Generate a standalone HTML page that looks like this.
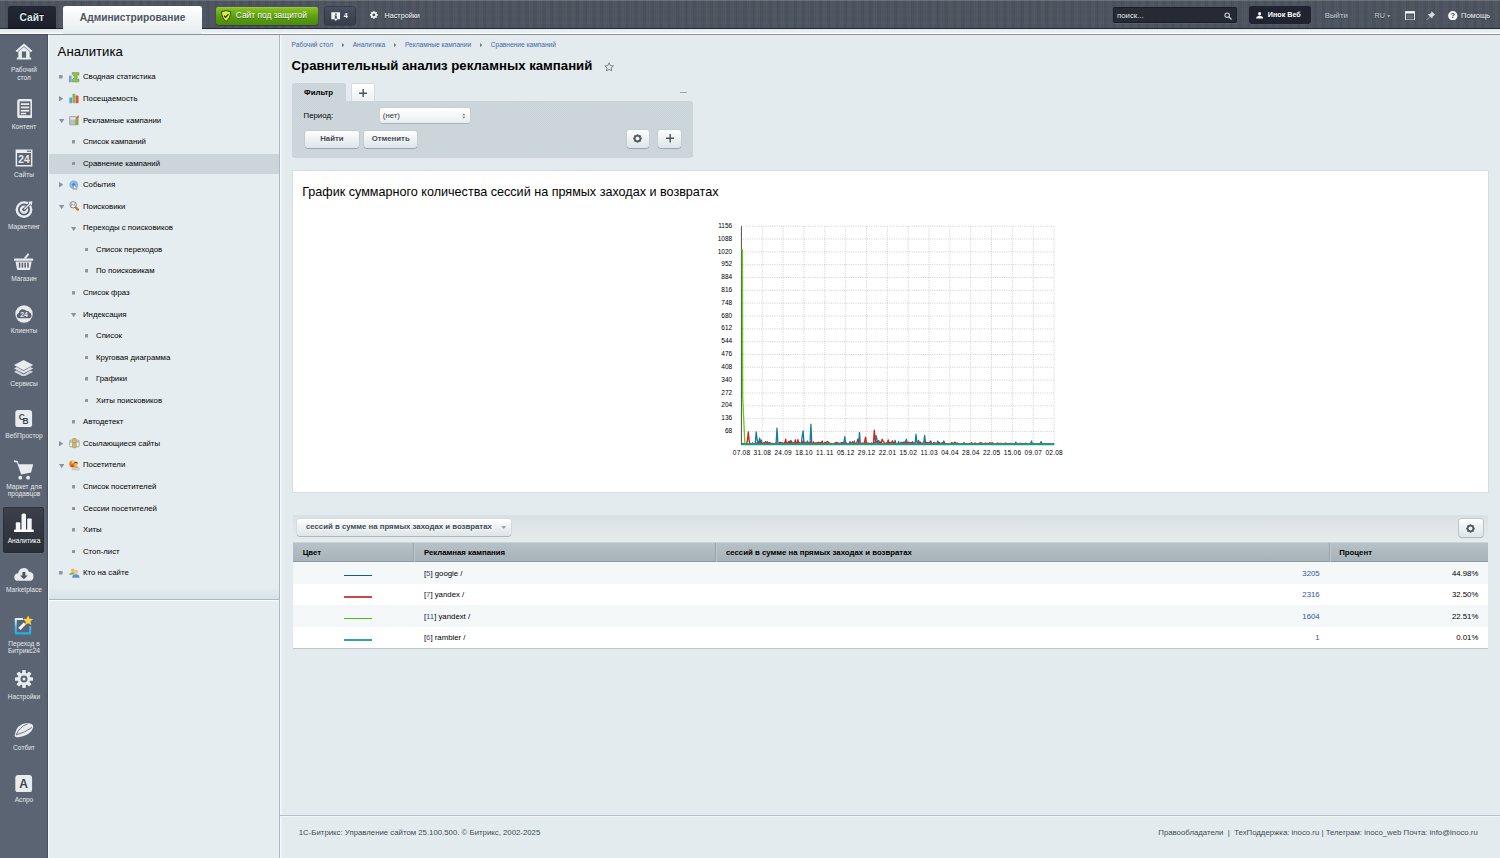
<!DOCTYPE html>
<html lang="ru">
<head>
<meta charset="utf-8">
<title>Сравнительный анализ рекламных кампаний</title>
<style>
html,body{margin:0;padding:0;}
html{background:#e4ebee;overflow:hidden;}
body{zoom:0.6;width:2500px;height:1430px;position:relative;overflow:hidden;font-family:"Liberation Sans",Arial,sans-serif;color:#000;font-size:13px;background:#e4ebee;}
a{text-decoration:none;color:#2675d7;}
/* ---------- header ---------- */
#hdr{position:absolute;left:0;top:0;width:2500px;height:48px;background-color:#4c545f;
 background-image:linear-gradient(rgba(255,255,255,.18) 1px,rgba(255,255,255,0) 2px,rgba(0,0,0,0) 46px,rgba(10,12,18,.6) 47.500px),linear-gradient(rgba(20,24,30,.06) 1px,transparent 1px),linear-gradient(90deg,rgba(20,24,30,.06) 1px,transparent 1px),linear-gradient(90deg,rgba(255,255,255,.03) 50%,transparent 50%);background-size:auto,4px 4px,4px 4px,14px 14px;}
#hdr-strip{position:absolute;left:0;top:48px;width:2500px;height:7px;background:linear-gradient(#dfe7ea,#eef3f5);border-bottom:1px solid #fff;}
#hdr-line{position:absolute;left:0;top:56px;width:2500px;height:2px;background:#8b9398;z-index:5;}
#hdr-line i{position:absolute;left:0;top:0;width:80px;height:2px;background:#474d58;}
.tab{position:absolute;top:10px;height:38px;border-radius:4px 4px 0 0;font-weight:bold;font-size:17px;line-height:40px;text-align:center;}
#tab-site{left:13px;width:80px;background:linear-gradient(#232834,#1c202b);color:#dfe8ef;box-shadow:inset 0 -2px 0 #10131a;text-shadow:0 -1px 0 #000;}
#tab-adm{left:105px;width:232px;height:46px;background:linear-gradient(#ffffff,#f1f5f6 50%,#e6ecef);color:#4b5460;text-shadow:0 1px 0 #fff;z-index:2;}
.hbtn{position:absolute;top:11px;height:31px;border-radius:4px;font-size:12px;line-height:30px;color:#fff;white-space:nowrap;}
.hbtn span,.hbtn svg{position:absolute;}
#btn-sec{left:360px;width:170px;background:linear-gradient(#8fc423,#5a9d10 55%,#4a8c0b);font-size:14px;box-shadow:0 1px 1px rgba(0,0,0,.55),inset 0 1px 0 rgba(255,255,255,.22);text-shadow:0 1px 1px rgba(40,70,0,.6);}
#btn-info{left:541px;width:51px;background:linear-gradient(#485161,#363d4a);box-shadow:0 0 0 1px #21252e,0 2px 1px rgba(255,255,255,.06);font-weight:bold;}
#btn-set{left:614px;width:100px;color:#fff;text-shadow:0 1px 0 rgba(0,0,0,.5);}
#srch{position:absolute;left:1855px;top:12px;width:204px;height:23px;background:#252a35;border:1px solid #1a1e26;box-shadow:0 1px 0 rgba(255,255,255,.14);border-radius:2px;color:#e3e9ee;font-size:13px;line-height:25px;}
#srch span{position:absolute;left:5px;top:0;}
#srch svg{position:absolute;left:184px;top:6px;}
#btn-user{left:2082px;width:103px;height:29.500px;top:10.500px;background:#1f2430;font-weight:bold;box-shadow:0 1px 0 rgba(255,255,255,.08);}
.hlink{position:absolute;top:11px;line-height:30px;font-size:13px;color:#c9d4df;white-space:nowrap;text-shadow:0 1px 0 rgba(0,0,0,.4);}
.hico{position:absolute;}
/* ---------- left icon menu ---------- */
#lm{position:absolute;left:0;top:56px;width:80px;height:1374px;background:#5b6472;box-shadow:inset -2px 0 0 #4c545f;}
.mi{position:absolute;left:0;width:80px;text-align:center;color:#e4e8ec;font-size:11px;line-height:12.700px;}
.mi svg{display:block;margin:0 auto;}
#mi-act{position:absolute;left:5.200px;top:789px;width:67.700px;height:76.300px;background:linear-gradient(#3b404b,#2a2f37);border-radius:5px;box-shadow:inset 0 0 0 1px #25292f,0 1px 0 rgba(255,255,255,.12);}
/* ---------- submenu ---------- */
#sm{position:absolute;left:80px;top:56px;width:385px;height:1374px;background:#e6edf0;border-right:1.600px solid #a9bacb;box-shadow:inset 2px 0 0 #f6f9fa,2.600px 0 0 #f3f7f9;}
#sm h2{position:absolute;left:16px;top:17px;margin:0;font-weight:normal;font-size:22px;line-height:26px;color:#000;}
.it{position:absolute;left:0;width:385px;height:36px;line-height:36px;font-size:13px;color:#000;white-space:nowrap;}
.it em{position:absolute;left:2px;top:2.800px;width:383px;height:32px;background:#cbd5da;}
.it span{position:absolute;top:0;}
.it svg{position:absolute;}
#sm-end{position:absolute;left:2px;top:943px;width:383px;height:1.600px;background:#a9bacb;box-shadow:0 1.600px 0 #fafcfd;}
#sm-sh{position:absolute;left:2px;top:923px;width:383px;height:20px;background:linear-gradient(rgba(190,205,214,0),rgba(190,205,214,.35));}
/* ---------- content ---------- */
#ct{position:absolute;left:466px;top:56px;width:2034px;height:1374px;}
#bc{position:absolute;left:20px;top:12.200px;font-size:11px;line-height:14px;color:#3d68a6;white-space:nowrap;}
#bc a{color:#3d68a6;}
#bc svg{display:inline-block;margin:0 14.400px 0 14.400px;vertical-align:0;}
#ttl{position:absolute;left:20px;top:39.800px;margin:0;font-size:22px;line-height:30px;font-weight:bold;color:#000;white-space:nowrap;}
#star{position:absolute;left:540px;top:47px;}
/* filter */
.tex{background-color:#ccd6da;background-image:conic-gradient(#c6d1d6 25%,#d1dade 0 50%,#c6d1d6 0 75%,#d1dade 0);background-size:3.33333px 3.33333px;}
#flt-tab{position:absolute;left:20px;top:82.600px;width:90px;height:31px;border-radius:5px 5px 0 0;font-weight:bold;font-size:13px;line-height:33px;text-align:center;color:#000;}
#flt-add{position:absolute;left:119px;top:82.600px;width:40px;height:30.500px;background:linear-gradient(#fff,#edf1f3);border:1px solid #d3dbdf;border-bottom:none;border-radius:4px 4px 0 0;box-sizing:border-box;}
#flt-min{position:absolute;left:667.500px;top:96.800px;width:11.500px;height:2.200px;background:#9ca6ac;}
#flt{position:absolute;left:20px;top:113px;width:668.500px;height:93px;border-radius:0 5px 5px 5px;box-shadow:0 1px 1px rgba(0,0,0,.18);}
.btn{position:absolute;height:28.500px;border-radius:4px;background:linear-gradient(#fff,#f0f3f5 40%,#dde5e8);box-shadow:0 1px 1px rgba(0,0,0,.38),0 0 0 1px rgba(0,0,0,.07);font-weight:bold;font-size:13px;line-height:28px;text-align:center;color:#3f4b54;text-shadow:0 1px 0 #fff;white-space:nowrap;}
.btn svg,#flt-add svg{position:absolute;}
#sel{position:absolute;left:147.500px;top:11px;width:149.500px;height:25.500px;border-radius:3px;background:linear-gradient(#fff,#f3f6f7 60%,#e6ecee);box-shadow:0 1px 1px rgba(0,0,0,.28),0 0 0 1px rgba(0,0,0,.05);font-size:13px;line-height:25px;}
/* chart block */
#cb{position:absolute;left:20px;top:226.700px;width:1992px;height:535.300px;background:#fff;border:1px solid #d6dee1;}
#cb h3{position:absolute;left:16px;top:24.600px;margin:0;font-weight:normal;font-size:21px;line-height:26px;white-space:nowrap;}
/* table */
#tb-top{position:absolute;left:22px;top:802px;width:1992px;height:45px;background:linear-gradient(#dae1e4,#e6ebed);}
#tb-head{position:absolute;left:22px;top:847px;width:1992px;height:34px;background:linear-gradient(#b6c2c7,#a7b3b9);border-top:1px solid #c9d2d6;border-bottom:1px solid #8d999f;box-sizing:border-box;font-weight:bold;font-size:13px;line-height:34px;}
#tb-head span{position:absolute;top:0;white-space:nowrap;}
#tb-head u{position:absolute;top:0;width:1px;height:32px;background:#98a4aa;box-shadow:1px 0 0 #c9d3d7;}
.row{position:absolute;left:22px;width:1992px;height:36px;font-size:13px;line-height:37.400px;background:#fff;}
.row.odd{background:#f5f8f9;}
.row span{position:absolute;top:0;white-space:nowrap;margin-top:.9px;}
.row a{color:#2e569c;}
.row hr{position:absolute;left:85.700px;top:20.700px;width:45.800px;height:2px;margin:0;border:0;}
#tb-bot{position:absolute;left:22px;top:1024.400px;width:1992px;height:1px;background:#bcc7cc;}
/* footer */
#ft-line{position:absolute;left:0;top:1302.500px;width:2034px;height:1.600px;background:#b3c2ce;box-shadow:0 1.600px 0 #f1f6f8;}
#ft-l{position:absolute;left:32px;top:1324.500px;font-size:13px;line-height:16px;color:#3f4b54;white-space:nowrap;}
#ft-r{position:absolute;right:37px;top:1324.500px;font-size:13px;line-height:16px;color:#3f4b54;white-space:nowrap;}
@supports not (zoom:0.6){body{transform:scale(.6);transform-origin:0 0;}}
</style>
</head>
<body>
<div id="hdr"></div>
<div id="hdr-strip"></div>
<div id="hdr-line"><i></i></div>
<div class="tab" id="tab-site">Сайт</div>
<div class="tab" id="tab-adm">Администрирование</div>
<div class="hbtn" id="btn-sec"><svg style="left:9px;top:5px" width="17" height="20" viewBox="0 0 17 20"><path d="M8.500 1 Q12 2.500 16 2.500 Q16.500 13 8.500 19 Q0.500 13 1 2.500 Q5 2.500 8.500 1 Z" fill="#d9f23c" stroke="#2b3d0d" stroke-width="1.600"/><path d="M5 9.500 L7.800 12.300 L12.300 6.800" fill="none" stroke="#26330c" stroke-width="2.200"/></svg><span style="left:33px;top:-1.300px">Сайт под защитой</span></div>
<div class="hbtn" id="btn-info"><svg style="left:10px;top:9px" width="16" height="16" viewBox="0 0 16 16"><path d="M0.500 0.500 H15.500 V12 H10.500 L8 15 L5.500 12 H0.500 Z" fill="#f2f4f6"/><rect x="7" y="2.500" width="2.400" height="2.200" fill="#2b303a"/><path d="M5.800 5.800 H9.400 V9.500 H10.500 V10.800 H5.800 V9.500 H7 V7 H5.800 Z" fill="#2b303a"/></svg><span style="left:32px;top:0">4</span></div>
<div class="hbtn" id="btn-set"><svg style="left:3px;top:8px" width="13" height="13" viewBox="0 0 15 15"><g fill="#f4f6f8"><circle cx="7.500" cy="7.500" r="5.600"/><rect x="6" y="0" width="3" height="15" rx="1"/><rect x="6" y="0" width="3" height="15" rx="1" transform="rotate(45 7.500 7.500)"/><rect x="6" y="0" width="3" height="15" rx="1" transform="rotate(90 7.500 7.500)"/><rect x="6" y="0" width="3" height="15" rx="1" transform="rotate(135 7.500 7.500)"/></g><circle cx="7.500" cy="7.500" r="2.700" fill="#474f59"/></svg><span style="left:27px;top:0">Настройки</span></div>
<div id="srch"><span>поиск...</span><svg width="13" height="13" viewBox="0 0 16 16"><circle cx="6.500" cy="6.500" r="4.600" fill="none" stroke="#c9d0d7" stroke-width="2.200"/><path d="M10 10 L14.500 14.500" stroke="#c9d0d7" stroke-width="2.800" stroke-linecap="round"/></svg></div>
<div class="hbtn" id="btn-user"><svg style="left:11px;top:9.500px" width="12" height="11" viewBox="0 0 14 13"><ellipse cx="7" cy="3.600" rx="3" ry="3.600" fill="#fff"/><path d="M0 13 Q0 8.500 5 8 H9 Q14 8.500 14 13 Z" fill="#fff"/></svg><span style="left:31px;top:0">Инок Веб</span></div>
<div class="hlink" style="left:2208px">Выйти</div>
<div class="hlink" style="left:2291px;font-size:12px;color:#c4cfda">RU</div>
<svg class="hico" style="left:2312px;top:24.500px" width="6" height="4" viewBox="0 0 8 5"><path d="M0.500 0.500 H7.500 L4 4.500 Z" fill="#bcc8d4"/></svg>
<svg class="hico" style="left:2341px;top:18px" width="17" height="16" viewBox="0 0 17 16"><rect x="1" y="1" width="15" height="14" fill="#4a525d" stroke="#f2f4f6" stroke-width="1.600"/><rect x="1" y="1" width="15" height="3.200" fill="#f2f4f6"/><rect x="3.500" y="6.500" width="10" height="6" fill="#636b76"/></svg>
<svg class="hico" style="left:2377px;top:18px" width="16" height="16" viewBox="0 0 16 16"><path d="M9.500 0.500 L15.500 6.500 L13.500 7 L11 9.500 L10.500 13 L7 9.500 L1 15.500 L0.500 15 L6.500 9 L3 5.500 L6.500 5 L9 2.500 Z" fill="#d4dae0"/></svg>
<svg class="hico" style="left:2414px;top:18px" width="16" height="16" viewBox="0 0 16 16"><circle cx="8" cy="8" r="7.800" fill="#f4f6f8"/><text x="8" y="12.500" text-anchor="middle" font-family="Liberation Sans,sans-serif" font-weight="bold" font-size="12.500" fill="#3a414b">?</text></svg>
<div class="hlink" style="left:2435px;color:#eef2f5;font-size:12.500px">Помощь</div>

<div id="lm">
<div id="mi-act"></div>
<!--LM-->
<svg style="position:absolute;left:25.5px;top:16.3px" width="29" height="27" viewBox="0 0 29 27"><path d="M15 1 L29 13 L27 15.5 L15 5.5 L3 15.5 L1 13 Z" fill="#e9ecef"/><path d="M5.5 14 L15 6.5 L24.5 14 V25 H5.5 Z M11.5 14 V25 H18.5 V14 Z" fill="#e9ecef" fill-rule="evenodd"/><rect x="3" y="24.5" width="24" height="3" fill="#e9ecef"/></svg>
<div class="mi" style="top:54.0px;color:#e4e8ec">Рабочий<br>стол</div>
<svg style="position:absolute;left:26.0px;top:108.8px" width="28" height="32" viewBox="0 0 28 32"><rect x="2" y="0" width="26" height="32" rx="4" fill="#e9ecef"/><rect x="6" y="4" width="18" height="23" fill="#5a6371"/><rect x="8" y="7" width="14" height="3" fill="#e9ecef"/><rect x="8" y="12.5" width="14" height="3" fill="#e9ecef"/><rect x="8" y="18" width="14" height="3" fill="#e9ecef"/><rect x="8" y="23" width="9" height="2.5" fill="#e9ecef"/></svg>
<div class="mi" style="top:148.2px;color:#e4e8ec">Контент</div>
<svg style="position:absolute;left:25.0px;top:192.3px" width="30" height="30" viewBox="0 0 30 30"><path d="M1 1 H29 V29 H1 Z M3.500 6.500 V26.500 H26.500 V6.500 Z" fill="#e9ecef" fill-rule="evenodd"/><rect x="20.500" y="2.500" width="2.500" height="2.500" fill="#4a525e"/><rect x="24" y="2.500" width="2.500" height="2.500" fill="#4a525e"/><text x="15" y="23.500" font-family="Liberation Sans,sans-serif" font-weight="bold" font-size="17" text-anchor="middle" fill="#e9ecef">24</text></svg>
<div class="mi" style="top:228.7px;color:#e4e8ec">Сайты</div>
<svg style="position:absolute;left:25.0px;top:276.8px" width="30" height="31" viewBox="0 0 30 31"><circle cx="15" cy="16" r="14" fill="#e9ecef"/><circle cx="15" cy="16" r="8.5" fill="none" stroke="#5a6371" stroke-width="3"/><circle cx="15" cy="16" r="3" fill="#5a6371"/><path d="M15 16 L27 4" stroke="#5a6371" stroke-width="5"/><path d="M15.5 15.5 L26 5" stroke="#e9ecef" stroke-width="2.2"/><path d="M22 3 L29 2 L28 9 Z" fill="#e9ecef"/></svg>
<div class="mi" style="top:316.0px;color:#e4e8ec">Маркетинг</div>
<svg style="position:absolute;left:24.0px;top:365.3px" width="32" height="29" viewBox="0 0 32 29"><path d="M16 9 L23 0.5 L25.5 2.5 L20 9 Z" fill="#e9ecef"/><rect x="0" y="9" width="32" height="4" rx="1" fill="#e9ecef"/><path d="M2.5 14 H29.5 L27 27 Q26.7 28.5 25 28.5 H7 Q5.3 28.5 5 27 Z" fill="#e9ecef"/><g fill="#5a6371"><rect x="8" y="16" width="2.6" height="8.5"/><rect x="12.7" y="16" width="2.6" height="8.5"/><rect x="17.3" y="16" width="2.6" height="8.5"/><rect x="22" y="16" width="2.6" height="8.5"/></g></svg>
<div class="mi" style="top:401.8px;color:#e4e8ec">Магазин</div>
<svg style="position:absolute;left:25.0px;top:452.3px" width="30" height="30" viewBox="0 0 30 30"><circle cx="15" cy="15" r="14.500" fill="#e9ecef"/><path d="M7 22 Q2.500 22 3 17.500 Q3.500 14 6.500 13.500 Q7 7 13 7 Q17 7 19 10 Q22.500 9 24 12.500 Q27.500 13 27.500 17.500 Q27.500 22 23 22 Z" fill="#5a6371"/><text x="15" y="20" font-family="Liberation Sans,sans-serif" font-weight="bold" font-size="11.500" text-anchor="middle" fill="#e9ecef">24</text></svg>
<div class="mi" style="top:488.5px;color:#e4e8ec">Клиенты</div>
<svg style="position:absolute;left:24.0px;top:543.3px" width="32" height="28" viewBox="0 0 32 28"><path d="M16 0 L32 8.5 L16 17 L0 8.5 Z" fill="#e9ecef"/><path d="M0 14 L4.5 11.8 L16 18.5 L27.500 11.8 L32 14 L16 22.5 Z" fill="#e9ecef" opacity=".92"/><path d="M0 19.500 L4.5 17.300 L16 24 L27.500 17.300 L32 19.500 L16 28 Z" fill="#e9ecef" opacity=".85"/></svg>
<div class="mi" style="top:576.8px;color:#e4e8ec">Сервисы</div>
<svg style="position:absolute;left:25.5px;top:627.0px" width="29" height="29" viewBox="0 0 29 29"><rect x="0.500" y="0" width="28" height="29" rx="5" fill="#e9ecef"/><text x="11.500" y="17" font-family="Liberation Sans,sans-serif" font-weight="bold" font-size="14" text-anchor="middle" fill="#3d4450">С</text><text x="17.500" y="23" font-family="Liberation Sans,sans-serif" font-weight="bold" font-size="14" text-anchor="middle" fill="#3d4450">В</text></svg>
<div class="mi" style="top:663.6px;color:#e4e8ec">ВебПростор</div>
<svg style="position:absolute;left:24.0px;top:710.8px" width="32" height="33" viewBox="0 0 32 33"><path d="M0 0.500 L6 1.500 L8 7 H32 L28.5 21 L12 24 L5 4 L0 3.500 Z" fill="#e9ecef"/><circle cx="10.500" cy="29.500" r="3.200" fill="#e9ecef"/><circle cx="23.500" cy="29.500" r="3.200" fill="#e9ecef"/></svg>
<div class="mi" style="top:748.8px;color:#e4e8ec">Маркет для<br>продавцов</div>
<svg style="position:absolute;left:23.5px;top:799.5px" width="33" height="32" viewBox="0 0 33 32"><rect x="3" y="15.500" width="7.500" height="13" rx="1.500" fill="#f4f5f6"/><rect x="12.500" y="1" width="7.500" height="28" rx="2.500" fill="#f4f5f6"/><rect x="22" y="9" width="7.500" height="20" rx="1.500" fill="#f4f5f6"/><rect x="0" y="27.500" width="33" height="4.500" rx="1.500" fill="#fff"/></svg>
<div class="mi" style="top:839.3px;color:#fff">Аналитика</div>
<svg style="position:absolute;left:23.5px;top:888.7px" width="33" height="24" viewBox="0 0 33 24"><path d="M8 23 Q0 23 0.500 16.500 Q1 11 7 10.500 Q8 2 16.500 1.500 Q23 1.500 25 8 Q33 8.500 32.5 16.500 Q32 23 25 23 Z" fill="#e9ecef"/><path d="M14 8.500 H19 V14 H23 L16.500 20.500 L10 14 H14 Z" fill="#4d5562"/></svg>
<div class="mi" style="top:920.1px;color:#e4e8ec">Marketplace</div>
<svg style="position:absolute;left:23.7px;top:971.5px" width="32" height="31" viewBox="0 0 32 31"><defs><linearGradient id="bg24" x1="0" y1="0" x2="0" y2="1"><stop offset="0" stop-color="#dff3fc"/><stop offset=".6" stop-color="#3cbdf2"/><stop offset="1" stop-color="#22aeea"/></linearGradient></defs><path d="M15 5 H3 V29 H27 V17" fill="none" stroke="url(#bg24)" stroke-width="3.400" stroke-linejoin="round"/><path d="M9 21.500 L18 12.500" stroke="#f4f4f4" stroke-width="5"/><path d="M23.500 -1 L26 4.500 L32 5 L27.500 9 L29 15 L23.500 12 L18.500 15 L19.500 9 L15 5 L21 4.500 Z" fill="#fbd043"/></svg>
<div class="mi" style="top:1010.1px;color:#e4e8ec">Переход в<br>Битрикс24</div>
<svg style="position:absolute;left:25.0px;top:1061.5px" width="30" height="30" viewBox="0 0 30 30"><g fill="#e9ecef"><circle cx="15" cy="15" r="10.500"/><rect x="12" y="0" width="6" height="30" rx="1.5"/><rect x="12" y="0" width="6" height="30" rx="1.500" transform="rotate(45 15 15)"/><rect x="12" y="0" width="6" height="30" rx="1.500" transform="rotate(90 15 15)"/><rect x="12" y="0" width="6" height="30" rx="1.500" transform="rotate(135 15 15)"/></g><circle cx="15" cy="15" r="5.800" fill="#5a6371"/><circle cx="15" cy="15" r="2.500" fill="#e9ecef"/></svg>
<div class="mi" style="top:1098.7px;color:#e4e8ec">Настройки</div>
<svg style="position:absolute;left:23.5px;top:1148.0px" width="33" height="27" viewBox="0 0 33 27"><path d="M1 22 Q4 3 22 1.500 Q33 2 32 9 Q29 21 8 25.500 Q1 26 1 22 Z" fill="#e9ecef"/><path d="M3.500 21.500 Q9 8 23 3" fill="none" stroke="#6b7480" stroke-width="1.600"/><path d="M3.500 21.500 Q18 18 30 9" fill="none" stroke="#6b7480" stroke-width="1.600"/></svg>
<div class="mi" style="top:1183.5px;color:#e4e8ec">Сотбит</div>
<svg style="position:absolute;left:25.5px;top:1235.3px" width="29" height="29" viewBox="0 0 29 29"><rect x="0.500" y="0" width="28" height="29" rx="5" fill="#e9ecef"/><text x="14.500" y="22" font-family="Liberation Sans,sans-serif" font-weight="bold" font-size="20" text-anchor="middle" fill="#3d4450">A</text></svg>
<div class="mi" style="top:1270.3px;color:#e4e8ec">Аспро</div>
<!--/LM-->
</div>

<div id="sm">
<h2>Аналитика</h2>
<!--SM-->
<div class="it" style="top:54.7px"><svg style="left:19px;top:15px" width="6" height="6" viewBox="0 0 6 6"><rect width="6" height="6" rx="1.500" fill="#8a96a1"/></svg><svg style="left:35px;top:9px" width="18" height="18" viewBox="0 0 17 17"><rect x="0" y="5.500" width="4" height="10.500" rx=".8" fill="#6aa2e0"/><path d="M5 1 H15.500 V5 H11 L13.500 8 L11 11 H15.500 V15.500 H5 V12.500 L9 8 L5 3.500 Z" fill="#93c34e" stroke="#5f9230" stroke-width="1"/></svg><span style="left:58.3px">Сводная статистика</span></div>
<div class="it" style="top:90.63px"><svg style="left:18.5px;top:13.500px" width="7" height="9" viewBox="0 0 7 9"><path d="M0 0 L7 4.500 L0 9 Z" fill="#8792a0"/></svg><svg style="left:35px;top:9px" width="18" height="18" viewBox="0 0 17 17"><rect x="0.500" y="7" width="4.500" height="9" rx="1" fill="#5b9be0"/><rect x="5.500" y="1" width="4.500" height="15" rx="1" fill="#86b94a"/><rect x="10.500" y="4" width="4.500" height="12" rx="1" fill="#e0503c"/></svg><span style="left:58.3px">Посещаемость</span></div>
<div class="it" style="top:126.56px"><svg style="left:17.8px;top:16px" width="9" height="7" viewBox="0 0 9 7"><path d="M0 0 H9 L4.500 7 Z" fill="#8792a0"/></svg><svg style="left:35px;top:9px" width="18" height="18" viewBox="0 0 17 17"><rect x="0.500" y="2.500" width="12" height="13" rx="1.500" fill="#b9bdc0" stroke="#8c9196"/><rect x="2" y="4" width="9" height="3" fill="#e9ecee"/><rect x="10" y="6" width="5" height="10" fill="#7fb13c"/><path d="M10 6 L15 0 L15.500 5 Z" fill="#e0503c"/></svg><span style="left:58.3px">Рекламные кампании</span></div>
<div class="it" style="top:162.49px"><svg style="left:39.5px;top:15px" width="6" height="6" viewBox="0 0 6 6"><rect width="6" height="6" rx="1.500" fill="#8a96a1"/></svg><span style="left:58.3px">Список кампаний</span></div>
<div class="it" style="top:198.42px"><em></em><svg style="left:39.5px;top:15px" width="6" height="6" viewBox="0 0 6 6"><rect width="6" height="6" rx="1.500" fill="#8a96a1"/></svg><span style="left:58.3px">Сравнение кампаний</span></div>
<div class="it" style="top:234.35px"><svg style="left:18.5px;top:13.500px" width="7" height="9" viewBox="0 0 7 9"><path d="M0 0 L7 4.500 L0 9 Z" fill="#8792a0"/></svg><svg style="left:35px;top:9px" width="18" height="18" viewBox="0 0 17 17"><circle cx="7.500" cy="7.500" r="6.800" fill="#6ea6ec"/><circle cx="7.500" cy="7.500" r="4.600" fill="none" stroke="#a9cbf5" stroke-width="1.400"/><circle cx="7.500" cy="7.500" r="2" fill="#3f7fd8"/><path d="M7 7 L7 15 L9 13.300 L10.500 16.500 L12 15.800 L10.600 12.800 L13 12.500 Z" fill="#fff" stroke="#666" stroke-width=".8"/></svg><span style="left:58.3px">События</span></div>
<div class="it" style="top:270.28px"><svg style="left:17.8px;top:16px" width="9" height="7" viewBox="0 0 9 7"><path d="M0 0 H9 L4.500 7 Z" fill="#8792a0"/></svg><svg style="left:35px;top:9px" width="18" height="18" viewBox="0 0 17 17"><circle cx="6.500" cy="6" r="5" fill="#fbfbfb" stroke="#7a7a7a" stroke-width="1.500"/><path d="M4 4.500 L4 7.500 M4 4.500 L6.500 6.500 L9 4.500 L9 7.500" stroke="#777" stroke-width="1.100" fill="none"/><path d="M10.800 10.300 L14 13.500" stroke="#cf6a1e" stroke-width="3.600" stroke-linecap="round"/></svg><span style="left:58.3px">Поисковики</span></div>
<div class="it" style="top:306.21px"><svg style="left:38.3px;top:16px" width="9" height="7" viewBox="0 0 9 7"><path d="M0 0 H9 L4.500 7 Z" fill="#8792a0"/></svg><span style="left:58.3px">Переходы с поисковиков</span></div>
<div class="it" style="top:342.14px"><svg style="left:61px;top:15px" width="6" height="6" viewBox="0 0 6 6"><rect width="6" height="6" rx="1.500" fill="#8a96a1"/></svg><span style="left:80px">Список переходов</span></div>
<div class="it" style="top:378.07px"><svg style="left:61px;top:15px" width="6" height="6" viewBox="0 0 6 6"><rect width="6" height="6" rx="1.500" fill="#8a96a1"/></svg><span style="left:80px">По поисковикам</span></div>
<div class="it" style="top:414.0px"><svg style="left:39.5px;top:15px" width="6" height="6" viewBox="0 0 6 6"><rect width="6" height="6" rx="1.500" fill="#8a96a1"/></svg><span style="left:58.3px">Список фраз</span></div>
<div class="it" style="top:449.93px"><svg style="left:38.3px;top:16px" width="9" height="7" viewBox="0 0 9 7"><path d="M0 0 H9 L4.500 7 Z" fill="#8792a0"/></svg><span style="left:58.3px">Индексация</span></div>
<div class="it" style="top:485.86px"><svg style="left:61px;top:15px" width="6" height="6" viewBox="0 0 6 6"><rect width="6" height="6" rx="1.500" fill="#8a96a1"/></svg><span style="left:80px">Список</span></div>
<div class="it" style="top:521.79px"><svg style="left:61px;top:15px" width="6" height="6" viewBox="0 0 6 6"><rect width="6" height="6" rx="1.500" fill="#8a96a1"/></svg><span style="left:80px">Круговая диаграмма</span></div>
<div class="it" style="top:557.72px"><svg style="left:61px;top:15px" width="6" height="6" viewBox="0 0 6 6"><rect width="6" height="6" rx="1.500" fill="#8a96a1"/></svg><span style="left:80px">Графики</span></div>
<div class="it" style="top:593.65px"><svg style="left:61px;top:15px" width="6" height="6" viewBox="0 0 6 6"><rect width="6" height="6" rx="1.500" fill="#8a96a1"/></svg><span style="left:80px">Хиты поисковиков</span></div>
<div class="it" style="top:629.58px"><svg style="left:39.5px;top:15px" width="6" height="6" viewBox="0 0 6 6"><rect width="6" height="6" rx="1.500" fill="#8a96a1"/></svg><span style="left:58.3px">Автодетект</span></div>
<div class="it" style="top:665.51px"><svg style="left:18.5px;top:13.500px" width="7" height="9" viewBox="0 0 7 9"><path d="M0 0 L7 4.500 L0 9 Z" fill="#8792a0"/></svg><svg style="left:35px;top:9px" width="18" height="18" viewBox="0 0 17 17"><rect x="1" y="3.500" width="15" height="10.500" rx="2" fill="#f0f0f0" stroke="#8c9094" stroke-width="1.200"/><rect x="1.500" y="4" width="14" height="3.500" fill="#b9bdc0"/><rect x="5.800" y="1" width="5.400" height="7.800" rx="2" fill="#a9bbd6" stroke="#d2a526" stroke-width="1.700"/><rect x="5.800" y="7.500" width="5.400" height="7.800" rx="2" fill="#a9bbd6" stroke="#d2a526" stroke-width="1.700"/></svg><span style="left:58.3px">Ссылающиеся сайты</span></div>
<div class="it" style="top:701.44px"><svg style="left:17.8px;top:16px" width="9" height="7" viewBox="0 0 9 7"><path d="M0 0 H9 L4.500 7 Z" fill="#8792a0"/></svg><svg style="left:35px;top:9px" width="18" height="18" viewBox="0 0 17 17"><circle cx="5.500" cy="6" r="5.300" fill="#ec8a2c"/><path d="M5.500 6 L1.500 9.500 A5.300 5.300 0 0 0 8 10.600 Z" fill="#e2402f"/><path d="M5.500 6 L9.500 2.500 A5.300 5.300 0 0 0 3.500 1.100 Z" fill="#f7c98a"/><rect x="4.500" y="12.300" width="12" height="3.400" rx="1.500" fill="#d3d7d7" stroke="#a3a8a8" stroke-width=".7"/><path d="M8 12.300 Q8 8.500 11 8.500 Q14 8.500 14 12.300 Z" fill="#dba52e"/><circle cx="11" cy="6" r="2.900" fill="#e9bb55"/><path d="M8.100 5.600 Q8.300 2.600 11 2.700 Q13.700 2.600 13.900 5.600 Q11 4.200 8.100 5.600 Z" fill="#5a4326"/></svg><span style="left:58.3px">Посетители</span></div>
<div class="it" style="top:737.37px"><svg style="left:39.5px;top:15px" width="6" height="6" viewBox="0 0 6 6"><rect width="6" height="6" rx="1.500" fill="#8a96a1"/></svg><span style="left:58.3px">Список посетителей</span></div>
<div class="it" style="top:773.3px"><svg style="left:39.5px;top:15px" width="6" height="6" viewBox="0 0 6 6"><rect width="6" height="6" rx="1.500" fill="#8a96a1"/></svg><span style="left:58.3px">Сессии посетителей</span></div>
<div class="it" style="top:809.23px"><svg style="left:39.5px;top:15px" width="6" height="6" viewBox="0 0 6 6"><rect width="6" height="6" rx="1.500" fill="#8a96a1"/></svg><span style="left:58.3px">Хиты</span></div>
<div class="it" style="top:845.16px"><svg style="left:39.5px;top:15px" width="6" height="6" viewBox="0 0 6 6"><rect width="6" height="6" rx="1.500" fill="#8a96a1"/></svg><span style="left:58.3px">Стоп-лист</span></div>
<div class="it" style="top:881.09px"><svg style="left:19px;top:15px" width="6" height="6" viewBox="0 0 6 6"><rect width="6" height="6" rx="1.500" fill="#8a96a1"/></svg><svg style="left:35px;top:9px" width="18" height="18" viewBox="0 0 17 17"><circle cx="6" cy="3.500" r="2.800" fill="#e9b866"/><path d="M0.500 11 Q1 6.500 6 6.500 Q9 6.500 9 10 Z" fill="#7fb13c"/><circle cx="11" cy="6" r="3.200" fill="#f0c27a"/><path d="M5 15.500 Q5 10 11 10 Q16.500 10 16.500 15.500 Z" fill="#5b8fd8"/></svg><span style="left:58.3px">Кто на сайте</span></div>
<!--/SM-->
<div id="sm-sh"></div><div id="sm-end"></div>
</div>

<div id="ct">
<div id="bc"><a>Рабочий стол</a><svg width="4" height="7" viewBox="0 0 4 7"><path d="M0 0 L4 3.500 L0 7 Z" fill="#6f7b86"/></svg><a>Аналитика</a><svg width="4" height="7" viewBox="0 0 4 7"><path d="M0 0 L4 3.500 L0 7 Z" fill="#6f7b86"/></svg><a>Рекламные кампании</a><svg width="4" height="7" viewBox="0 0 4 7"><path d="M0 0 L4 3.500 L0 7 Z" fill="#6f7b86"/></svg><a>Сравнение кампаний</a></div>
<h1 id="ttl">Сравнительный анализ рекламных кампаний</h1>
<svg id="star" width="17" height="16" viewBox="0 0 19 18"><path d="M9.500 1.500 L11.900 6.800 L17.600 7.400 L13.300 11.200 L14.600 16.800 L9.500 13.900 L4.400 16.800 L5.700 11.200 L1.400 7.400 L7.100 6.800 Z" fill="none" stroke="#6d7880" stroke-width="1.700" stroke-linejoin="round"/></svg>
<div id="flt-tab" class="tex">Фильтр</div>
<div id="flt-add"><svg style="left:11.5px;top:8px" width="14" height="14" viewBox="0 0 14 14"><path d="M7 0 V14 M0 7 H14" stroke="#4a545c" stroke-width="2.400" fill="none"/></svg></div>
<div id="flt-min"></div>
<div id="flt" class="tex">
 <span style="position:absolute;left:20px;top:16.500px;line-height:16px;color:#000">Период:</span>
 <div id="sel"><span style="position:absolute;left:4.500px;top:0;color:#2f3a42">(нет)</span><svg style="position:absolute;left:136px;top:8px" width="6" height="10" viewBox="0 0 7 11"><path d="M3.500 0.500 L6 4 H1 Z M3.500 10.500 L6 7 H1 Z" fill="#646e75"/></svg></div>
 <div class="btn" style="left:22.500px;top:49px;width:89.300px">Найти</div>
 <div class="btn" style="left:120.500px;top:49px;width:89.300px">Отменить</div>
 <div class="btn" style="left:558.500px;top:47.500px;width:37px;height:30px"><svg style="left:10.5px;top:7.5px" width="15" height="15" viewBox="0 0 15 15"><g fill="#4a545c"><circle cx="7.500" cy="7.500" r="5.700"/><rect x="6" y="0.300" width="3" height="14.400" rx=".8"/><rect x="6" y="0.300" width="3" height="14.400" rx=".8" transform="rotate(45 7.500 7.500)"/><rect x="6" y="0.300" width="3" height="14.400" rx=".8" transform="rotate(90 7.500 7.500)"/><rect x="6" y="0.300" width="3" height="14.400" rx=".8" transform="rotate(135 7.500 7.500)"/></g><circle cx="7.500" cy="7.500" r="3.300" fill="#f1f4f5"/></svg></div>
 <div class="btn" style="left:611.500px;top:47.500px;width:37px;height:30px"><svg style="left:12.500px;top:7.500px" width="14" height="14" viewBox="0 0 14 14"><path d="M7 0 V14 M0 7 H14" stroke="#4a545c" stroke-width="2.400" fill="none"/></svg></div>
</div>
<div id="cb">
 <h3>График суммарного количества сессий на прямых заходах и возвратах</h3>
 <!--CHART-->
<svg id="chart" style="position:absolute;left:-487px;top:-283.700px" width="2500" height="1430" viewBox="0 0 1500 858">
<path d="M741.4 226.20H1054.1M741.4 239.03H1054.1M741.4 251.86H1054.1M741.4 264.69H1054.1M741.4 277.52H1054.1M741.4 290.35H1054.1M741.4 303.18H1054.1M741.4 316.01H1054.1M741.4 328.84H1054.1M741.4 341.66H1054.1M741.4 354.49H1054.1M741.4 367.32H1054.1M741.4 380.15H1054.1M741.4 392.98H1054.1M741.4 405.81H1054.1M741.4 418.64H1054.1M741.4 431.47H1054.1M762.25 226.2V444.3M783.09 226.2V444.3M803.94 226.2V444.3M824.79 226.2V444.3M845.63 226.2V444.3M866.48 226.2V444.3M887.33 226.2V444.3M908.17 226.2V444.3M929.02 226.2V444.3M949.87 226.2V444.3M970.71 226.2V444.3M991.56 226.2V444.3M1012.41 226.2V444.3M1033.25 226.2V444.3M1054.10 226.2V444.3" fill="none" stroke="#989898" stroke-width="0.6" stroke-dasharray="0.6 1.2"/>
<path d="M741.4 226.2V444.3H1054.1" fill="none" stroke="#000" stroke-width="0.7"/>
<g font-family="Liberation Sans,sans-serif" font-size="6.500" fill="#000">
<text x="732.2" y="227.8" text-anchor="end">1156</text>
<text x="732.2" y="240.6" text-anchor="end">1088</text>
<text x="732.2" y="253.5" text-anchor="end">1020</text>
<text x="732.2" y="266.3" text-anchor="end">952</text>
<text x="732.2" y="279.1" text-anchor="end">884</text>
<text x="732.2" y="291.9" text-anchor="end">816</text>
<text x="732.2" y="304.8" text-anchor="end">748</text>
<text x="732.2" y="317.6" text-anchor="end">680</text>
<text x="732.2" y="330.4" text-anchor="end">612</text>
<text x="732.2" y="343.3" text-anchor="end">544</text>
<text x="732.2" y="356.1" text-anchor="end">476</text>
<text x="732.2" y="368.9" text-anchor="end">408</text>
<text x="732.2" y="381.8" text-anchor="end">340</text>
<text x="732.2" y="394.6" text-anchor="end">272</text>
<text x="732.2" y="407.4" text-anchor="end">204</text>
<text x="732.2" y="420.2" text-anchor="end">136</text>
<text x="732.2" y="433.1" text-anchor="end">68</text>
<text x="732.8" y="454.7" textLength="17.300" lengthAdjust="spacing">07.08</text>
<text x="753.6" y="454.7" textLength="17.300" lengthAdjust="spacing">31.08</text>
<text x="774.4" y="454.7" textLength="17.300" lengthAdjust="spacing">24.09</text>
<text x="795.3" y="454.7" textLength="17.300" lengthAdjust="spacing">18.10</text>
<text x="816.1" y="454.7" textLength="17.300" lengthAdjust="spacing">11.11</text>
<text x="837.0" y="454.7" textLength="17.300" lengthAdjust="spacing">05.12</text>
<text x="857.8" y="454.7" textLength="17.300" lengthAdjust="spacing">29.12</text>
<text x="878.7" y="454.7" textLength="17.300" lengthAdjust="spacing">22.01</text>
<text x="899.5" y="454.7" textLength="17.300" lengthAdjust="spacing">15.02</text>
<text x="920.4" y="454.7" textLength="17.300" lengthAdjust="spacing">11.03</text>
<text x="941.2" y="454.7" textLength="17.300" lengthAdjust="spacing">04.04</text>
<text x="962.1" y="454.7" textLength="17.300" lengthAdjust="spacing">28.04</text>
<text x="982.9" y="454.7" textLength="17.300" lengthAdjust="spacing">22.05</text>
<text x="1003.8" y="454.7" textLength="17.300" lengthAdjust="spacing">15.06</text>
<text x="1024.6" y="454.7" textLength="17.300" lengthAdjust="spacing">09.07</text>
<text x="1045.4" y="454.7" textLength="17.300" lengthAdjust="spacing">02.08</text>
</g>
<polyline points="741.4,444.1 742.3,444.2 743.1,443.4 744.0,444.3 744.9,443.7 745.7,444.0 746.6,444.3 747.5,443.7 748.3,444.3 749.2,443.9 750.1,444.3 751.0,444.3 751.8,443.9 752.7,442.8 753.6,444.3 754.4,444.2 755.3,443.4 756.2,432.0 757.0,438.5 757.9,444.0 758.8,442.2 759.6,438.1 760.5,442.7 761.4,440.0 762.2,444.3 763.1,444.3 764.0,444.1 764.9,442.8 765.7,441.4 766.6,443.6 767.5,443.4 768.3,444.0 769.2,443.6 770.1,444.3 770.9,444.3 771.8,444.2 772.7,443.3 773.5,443.9 774.4,444.1 775.3,443.5 776.1,443.8 777.0,428.2 777.9,442.9 778.8,443.2 779.6,444.2 780.5,443.6 781.4,443.7 782.2,442.6 783.1,443.1 784.0,444.1 784.8,442.2 785.7,444.3 786.6,443.9 787.4,443.0 788.3,444.2 789.2,441.2 790.0,444.3 790.9,440.3 791.8,443.0 792.6,443.6 793.5,442.6 794.4,444.1 795.3,443.2 796.1,443.5 797.0,443.6 797.9,443.8 798.7,442.7 799.6,442.3 800.5,443.8 801.3,443.3 802.2,436.0 803.1,430.8 803.9,443.4 804.8,442.1 805.7,442.8 806.5,444.1 807.4,441.0 808.3,443.3 809.2,444.3 810.0,443.8 810.9,424.2 811.8,444.3 812.6,444.3 813.5,443.0 814.4,444.3 815.2,444.2 816.1,444.0 817.0,442.6 817.8,444.3 818.7,443.9 819.6,443.6 820.4,442.6 821.3,442.8 822.2,442.7 823.0,444.1 823.9,443.9 824.8,444.0 825.7,442.6 826.5,442.3 827.4,444.2 828.3,444.2 829.1,444.2 830.0,444.2 830.9,443.8 831.7,443.5 832.6,444.1 833.5,444.3 834.3,443.9 835.2,444.0 836.1,443.6 836.9,442.3 837.8,443.3 838.7,443.7 839.6,443.5 840.4,443.3 841.3,444.3 842.2,442.5 843.0,443.0 843.9,442.6 844.8,436.6 845.6,444.0 846.5,443.9 847.4,444.3 848.2,443.4 849.1,444.3 850.0,441.4 850.8,444.2 851.7,444.2 852.6,444.0 853.5,444.3 854.3,441.0 855.2,444.2 856.1,444.3 856.9,444.0 857.8,444.3 858.7,442.6 859.5,432.4 860.4,444.3 861.3,444.2 862.1,444.0 863.0,444.0 863.9,444.3 864.7,442.7 865.6,442.1 866.5,443.8 867.3,443.8 868.2,444.3 869.1,444.3 870.0,444.0 870.8,444.1 871.7,442.8 872.6,444.2 873.4,444.3 874.3,442.3 875.2,443.7 876.0,435.5 876.9,439.0 877.8,444.3 878.6,440.3 879.5,442.2 880.4,442.7 881.2,443.2 882.1,444.2 883.0,444.0 883.9,444.2 884.7,443.0 885.6,443.7 886.5,443.0 887.3,444.1 888.2,444.2 889.1,442.9 889.9,442.2 890.8,442.7 891.7,442.9 892.5,442.8 893.4,443.1 894.3,444.2 895.1,440.3 896.0,444.0 896.9,444.3 897.8,444.3 898.6,441.4 899.5,444.2 900.4,443.2 901.2,442.3 902.1,443.9 903.0,442.4 903.8,442.2 904.7,442.3 905.6,441.0 906.4,439.2 907.3,444.2 908.2,444.2 909.0,444.2 909.9,443.4 910.8,442.5 911.6,442.7 912.5,443.8 913.4,443.4 914.3,442.9 915.1,444.3 916.0,434.2 916.9,442.5 917.7,443.0 918.6,440.3 919.5,443.8 920.3,444.2 921.2,443.0 922.1,444.1 922.9,443.0 923.8,442.3 924.7,435.4 925.5,444.0 926.4,442.5 927.3,443.2 928.2,444.2 929.0,444.3 929.9,444.3 930.8,441.0 931.6,443.0 932.5,444.3 933.4,443.0 934.2,442.4 935.1,443.5 936.0,444.1 936.8,443.7 937.7,441.0 938.6,444.3 939.4,442.5 940.3,443.5 941.2,443.8 942.0,442.7 942.9,444.0 943.8,441.0 944.7,443.1 945.5,444.2 946.4,444.2 947.3,444.1 948.1,444.2 949.0,443.7 949.9,444.2 950.7,444.0 951.6,444.3 952.5,442.9 953.3,444.1 954.2,443.9 955.1,443.7 955.9,442.9 956.8,444.0 957.7,442.9 958.6,443.9 959.4,443.8 960.3,443.9 961.2,444.3 962.0,444.0 962.9,444.2 963.8,444.3 964.6,443.3 965.5,444.3 966.4,444.0 967.2,443.5 968.1,443.8 969.0,444.1 969.8,443.9 970.7,443.8 971.6,443.4 972.5,444.3 973.3,443.8 974.2,444.2 975.1,444.2 975.9,443.4 976.8,443.9 977.7,443.9 978.5,443.5 979.4,443.1 980.3,444.0 981.1,443.8 982.0,444.0 982.9,443.9 983.7,443.7 984.6,444.0 985.5,443.9 986.3,444.0 987.2,443.2 988.1,443.7 989.0,443.3 989.8,443.2 990.7,444.2 991.6,443.9 992.4,443.2 993.3,443.4 994.2,444.3 995.0,444.3 995.9,444.1 996.8,444.3 997.6,444.2 998.5,444.3 999.4,443.8 1000.2,443.6 1001.1,443.4 1002.0,444.3 1002.9,443.7 1003.7,443.8 1004.6,444.3 1005.5,443.5 1006.3,443.3 1007.2,444.3 1008.1,443.4 1008.9,444.1 1009.8,444.1 1010.7,443.3 1011.5,443.6 1012.4,444.3 1013.3,444.1 1014.1,444.0 1015.0,444.2 1015.9,442.0 1016.7,444.2 1017.6,443.8 1018.5,444.3 1019.4,444.0 1020.2,444.1 1021.1,444.3 1022.0,444.2 1022.8,444.0 1023.7,444.1 1024.6,444.3 1025.4,443.5 1026.3,443.8 1027.2,443.6 1028.0,444.3 1028.9,444.2 1029.8,444.3 1030.6,443.8 1031.5,441.0 1032.4,444.3 1033.3,444.2 1034.1,443.7 1035.0,443.8 1035.9,444.2 1036.7,444.3 1037.6,443.6 1038.5,444.0 1039.3,443.9 1040.2,444.3 1041.1,441.5 1041.9,443.9 1042.8,444.2 1043.7,444.3 1044.5,443.6 1045.4,444.0 1046.3,443.8 1047.2,444.3 1048.0,443.7 1048.9,444.3 1049.8,443.7 1050.6,444.1 1051.5,444.2 1052.4,444.1 1053.2,443.6 1054.1,444.2" fill="none" stroke="#177a9c" stroke-width="1.300" stroke-linejoin="round"/>
<polyline points="741.4,444.3 742.3,443.6 743.1,444.2 744.0,444.3 744.9,444.2 745.7,444.3 746.6,444.2 747.5,440.0 748.3,431.9 749.2,441.0 750.1,444.1 751.0,443.6 751.8,444.2 752.7,444.0 753.6,444.3 754.4,444.1 755.3,444.3 756.2,442.9 757.0,443.5 757.9,444.2 758.8,443.7 759.6,442.0 760.5,444.3 761.4,442.6 762.2,443.8 763.1,443.7 764.0,442.5 764.9,443.9 765.7,443.6 766.6,443.1 767.5,441.8 768.3,444.0 769.2,442.5 770.1,443.0 770.9,443.2 771.8,443.9 772.7,444.0 773.5,444.3 774.4,444.3 775.3,444.3 776.1,442.9 777.0,444.1 777.9,444.2 778.8,444.3 779.6,442.5 780.5,442.3 781.4,443.1 782.2,444.1 783.1,444.1 784.0,444.1 784.8,443.8 785.7,439.2 786.6,443.8 787.4,444.1 788.3,441.9 789.2,441.8 790.0,443.5 790.9,444.1 791.8,441.9 792.6,444.1 793.5,444.0 794.4,444.3 795.3,440.0 796.1,443.7 797.0,443.6 797.9,439.6 798.7,443.6 799.6,444.3 800.5,444.1 801.3,444.3 802.2,443.9 803.1,441.0 803.9,444.3 804.8,444.1 805.7,444.2 806.5,443.4 807.4,443.6 808.3,442.8 809.2,443.2 810.0,443.0 810.9,442.3 811.8,443.9 812.6,444.0 813.5,441.8 814.4,444.2 815.2,442.9 816.1,443.2 817.0,444.3 817.8,442.5 818.7,442.2 819.6,443.3 820.4,442.9 821.3,442.6 822.2,441.0 823.0,443.6 823.9,443.6 824.8,442.5 825.7,442.6 826.5,442.5 827.4,441.5 828.3,442.2 829.1,443.1 830.0,443.1 830.9,444.2 831.7,444.3 832.6,444.3 833.5,444.0 834.3,444.3 835.2,442.5 836.1,443.5 836.9,443.3 837.8,443.3 838.7,443.1 839.6,443.7 840.4,444.3 841.3,442.6 842.2,442.8 843.0,443.6 843.9,443.6 844.8,443.2 845.6,444.3 846.5,442.9 847.4,444.1 848.2,444.3 849.1,444.1 850.0,442.9 850.8,444.2 851.7,442.9 852.6,441.8 853.5,443.7 854.3,443.9 855.2,443.7 856.1,443.1 856.9,442.8 857.8,439.2 858.7,443.2 859.5,444.3 860.4,444.2 861.3,444.1 862.1,442.9 863.0,444.1 863.9,443.5 864.7,441.0 865.6,437.2 866.5,444.1 867.3,443.1 868.2,443.1 869.1,443.1 870.0,444.1 870.8,443.6 871.7,443.7 872.6,443.7 873.4,444.3 874.3,430.2 875.2,440.0 876.0,441.8 876.9,442.0 877.8,444.3 878.6,443.8 879.5,442.6 880.4,441.9 881.2,443.8 882.1,439.2 883.0,441.0 883.9,442.0 884.7,444.2 885.6,443.4 886.5,444.2 887.3,443.6 888.2,439.9 889.1,444.3 889.9,442.6 890.8,443.6 891.7,442.3 892.5,440.8 893.4,444.2 894.3,442.2 895.1,443.7 896.0,444.3 896.9,444.3 897.8,443.7 898.6,443.8 899.5,444.1 900.4,444.2 901.2,444.0 902.1,444.0 903.0,442.5 903.8,444.3 904.7,442.8 905.6,442.5 906.4,444.3 907.3,442.1 908.2,443.0 909.0,442.2 909.9,444.1 910.8,443.9 911.6,443.9 912.5,441.7 913.4,443.4 914.3,444.0 915.1,443.8 916.0,444.1 916.9,444.3 917.7,444.3 918.6,442.5 919.5,444.1 920.3,442.1 921.2,444.1 922.1,444.1 922.9,443.6 923.8,444.2 924.7,444.0 925.5,442.0 926.4,442.4 927.3,442.7 928.2,443.3 929.0,442.3 929.9,442.2 930.8,443.6 931.6,443.1 932.5,444.3 933.4,443.0 934.2,443.8 935.1,443.0 936.0,443.3 936.8,444.1 937.7,444.3 938.6,442.3 939.4,444.3 940.3,443.8 941.2,444.0 942.0,444.1 942.9,443.1 943.8,442.2 944.7,444.2 945.5,443.4 946.4,444.1 947.3,443.6 948.1,444.0 949.0,444.2 949.9,444.2 950.7,444.2 951.6,442.6 952.5,443.8 953.3,444.2 954.2,442.6 955.1,442.2 955.9,443.9 956.8,444.3 957.7,444.2 958.6,444.3 959.4,444.1 960.3,444.3 961.2,444.2 962.0,444.2 962.9,443.7 963.8,442.8 964.6,443.2 965.5,444.0 966.4,444.0 967.2,443.8 968.1,444.0 969.0,444.1 969.8,444.3 970.7,444.2 971.6,442.6 972.5,444.3 973.3,443.8 974.2,443.6 975.1,442.9 975.9,444.2 976.8,444.2 977.7,444.2 978.5,444.0 979.4,444.0 980.3,442.7 981.1,443.0 982.0,443.0 982.9,444.3 983.7,444.3 984.6,443.4 985.5,443.0 986.3,443.9 987.2,443.7 988.1,444.3 989.0,444.0 989.8,442.9 990.7,443.2 991.6,443.1 992.4,442.8 993.3,444.2 994.2,444.3 995.0,444.3 995.9,443.9 996.8,443.6 997.6,443.0 998.5,443.5 999.4,443.7 1000.2,443.4 1001.1,444.0 1002.0,443.9 1002.9,444.3 1003.7,443.4 1004.6,444.2 1005.5,443.1 1006.3,443.7 1007.2,444.2 1008.1,444.3 1008.9,444.2 1009.8,443.7 1010.7,443.6 1011.5,444.3 1012.4,444.3 1013.3,443.9 1014.1,443.9 1015.0,444.1 1015.9,444.2 1016.7,443.8 1017.6,444.3 1018.5,444.2 1019.4,444.0 1020.2,443.2 1021.1,443.8 1022.0,443.4 1022.8,444.0 1023.7,444.2 1024.6,444.2 1025.4,443.2 1026.3,443.7 1027.2,444.2 1028.0,444.3 1028.9,444.0 1029.8,443.8 1030.6,444.1 1031.5,444.2 1032.4,443.8 1033.3,443.4 1034.1,444.2 1035.0,444.3 1035.9,444.2 1036.7,444.1 1037.6,443.8 1038.5,444.3 1039.3,443.7 1040.2,443.8 1041.1,444.1 1041.9,444.3 1042.8,443.4 1043.7,444.2 1044.5,443.7 1045.4,444.3 1046.3,444.3 1047.2,443.8 1048.0,444.2 1048.9,443.5 1049.8,444.1 1050.6,444.3 1051.5,444.3 1052.4,444.1 1053.2,443.9 1054.1,443.5" fill="none" stroke="#cf1f1f" stroke-width="1.300" stroke-linejoin="round"/>
<polyline points="741.4,250 742.4,250 742.6999999999999,397 744.9,444.3 1054.1,444.3" fill="none" stroke="#63cc0a" stroke-width="1.300"/>
<path d="M741.4 444.3H1054.1" fill="none" stroke="#0f9f8f" stroke-width="1.700"/>
</svg>
<!--/CHART-->
</div>
<div id="tb-top">
 <div class="btn" style="left:7px;top:6.700px;width:357px;text-align:left;text-indent:15px">сессий в сумме на прямых заходах и возвратах<svg style="left:340px;top:12px" width="9" height="5" viewBox="0 0 9 5"><path d="M0.500 0.500 H8.500 L4.500 4.500 Z" fill="#89949a"/></svg></div>
 <div class="btn" style="left:1943px;top:7.500px;width:40px;height:30px;box-shadow:0 0 0 1px #a3acb1,0 2px 1px rgba(0,0,0,.12)"><svg style="left:12.5px;top:7.5px" width="15" height="15" viewBox="0 0 15 15"><g fill="#4a545c"><circle cx="7.500" cy="7.500" r="5.700"/><rect x="6" y="0.300" width="3" height="14.400" rx=".8"/><rect x="6" y="0.300" width="3" height="14.400" rx=".8" transform="rotate(45 7.500 7.500)"/><rect x="6" y="0.300" width="3" height="14.400" rx=".8" transform="rotate(90 7.500 7.500)"/><rect x="6" y="0.300" width="3" height="14.400" rx=".8" transform="rotate(135 7.500 7.500)"/></g><circle cx="7.500" cy="7.500" r="3.300" fill="#f1f4f5"/></svg></div>
</div>
<div id="tb-head"><span style="left:16.500px">Цвет</span><u style="left:201px"></u><span style="left:218.500px">Рекламная кампания</span><u style="left:703px"></u><span style="left:722px">сессий в сумме на прямых заходах и возвратах</span><u style="left:1726.500px"></u><span style="left:1744px">Процент</span></div>
<div class="row odd" style="top:881px;height:36.200px"><hr style="background:#0f5f8a;top:20.800px"><span style="left:218.500px;top:.100px">[<a>5</a>] google /</span><span style="right:280.500px;top:.100px"><a>3205</a></span><span style="right:16px;top:.100px">44.98%</span></div>
<div class="row" style="top:917.2px;height:35.8px"><hr style="background:#d2434a;top:20.7px"><span style="left:218.500px;top:0px">[<a>7</a>] yandex /</span><span style="right:280.500px;top:0px"><a>2316</a></span><span style="right:16px;top:0px">32.50%</span></div>
<div class="row odd" style="top:953px;height:35.7px"><hr style="background:#4cc010;top:20.7px"><span style="left:218.500px;top:0px">[<a>11</a>] yandext /</span><span style="right:280.500px;top:0px"><a>1604</a></span><span style="right:16px;top:0px">22.51%</span></div>
<div class="row" style="top:988.7px;height:35.7px"><hr style="background:#2fa5a5;top:20.7px;height:3px"><span style="left:218.500px;top:0px">[<a>6</a>] rambler /</span><span style="right:280.500px;top:0px"><a>1</a></span><span style="right:16px;top:0px">0.01%</span></div>
<div id="tb-bot"></div>
<div id="ft-line"></div>
<div id="ft-l">1С-Битрикс: Управление сайтом 25.100.500. © Битрикс, 2002-2025</div>
<div id="ft-r">Правообладатели &nbsp;|&nbsp; ТехПоддержка: inoco.ru | Телеграм: inoco_web Почта: info@inoco.ru</div>
</div>
</body>
</html>
